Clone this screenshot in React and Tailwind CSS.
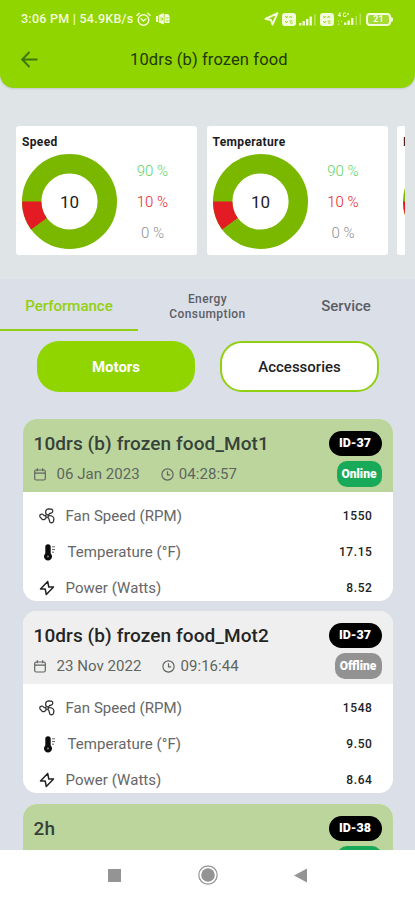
import React from 'react';

const stats = [{ name: 'Speed' }, { name: 'Temperature' }, { name: 'Input' }];

const motors = [
  {
    name: '10drs (b) frozen food_Mot1',
    date: '06 Jan 2023',
    time: '04:28:57',
    id: 'ID-37',
    online: true,
    values: ['1550', '17.15', '8.52'],
  },
  {
    name: '10drs (b) frozen food_Mot2',
    date: '23 Nov 2022',
    time: '09:16:44',
    id: 'ID-37',
    online: false,
    values: ['1548', '9.50', '8.64'],
  },
  {
    name: '2h',
    date: '06 Jan 2023',
    time: '04:28:57',
    id: 'ID-38',
    online: true,
    values: ['1550', '17.15', '8.52'],
  },
];

const SimIcon = () => (
  <svg width="14" height="13" viewBox="0 0 14 13">
    <rect width="14" height="13" rx="3" fill="#f4fbdc" />
    <path d="M3.5 3l1 2 1-2M7.5 5l1-2 1.5 2M3.5 8l1 2 1-2M7.5 8h3M8 10h2.5" fill="none" stroke="#90d500" strokeWidth="0.9" />
  </svg>
);

const SignalIcon = () => (
  <svg width="18" height="13" viewBox="0 0 18 13" fill="#f4fbdc">
    <rect x="0" y="10" width="2.4" height="2.5" />
    <rect x="3.5" y="8" width="2.4" height="4.5" />
    <rect x="7" y="6" width="2.4" height="6.5" />
    <rect x="10.5" y="3.5" width="2.4" height="9" />
    <rect x="15" y="1" width="1.6" height="11.5" opacity="0.4" />
  </svg>
);

const StatusBar = () => (
  <div className="flex h-[38px] items-center pl-[21px] pr-[22px] text-[#f4fbdc]">
    <span className="text-[12.5px] font-medium tracking-[0.25px] whitespace-nowrap">3:06 PM | 54.9KB/s</span>
    <svg className="ml-[3px]" width="15" height="15" viewBox="0 0 15 15" fill="none" stroke="#f4fbdc" strokeWidth="1.5" strokeLinecap="round">
      <circle cx="7.5" cy="8" r="5.3" />
      <path d="M1 3.2L3.2 1.2M14 3.2L11.8 1.2M5.3 6.8L7.2 9L9.8 7" />
    </svg>
    <svg className="ml-[5px]" width="14" height="12" viewBox="0 0 14 12" fill="#f4fbdc">
      <path d="M0 3h2v6H0zM2.8 2l5-2v11.5l-5-2zM8.5 1H12l1.5 2v7H8.5z" />
      <path d="M4.5 5h2v2h-2M10 4.5l1 1L12.5 4M10 8h2.5" fill="none" stroke="#90d500" strokeWidth="0.8" />
    </svg>
    <div className="ml-auto flex items-center gap-[3px]">
      <svg width="15" height="14" viewBox="0 0 15 14" fill="none" stroke="#f4fbdc" strokeWidth="2" strokeLinejoin="round">
        <path d="M1.5 7L13.5 1.2L8.5 12.5L7 8z" />
      </svg>
      <SimIcon />
      <SignalIcon />
      <div className="flex items-center">
        <SimIcon />
        <svg className="ml-[3px]" width="26" height="14" viewBox="0 0 26 14" fill="#f4fbdc">
          <path d="M3 0.5L1.2 3.5H4M3 0.5V5M9 1H6.5V4.5H9V3M10 2h2M11 1v2" fill="none" stroke="#f4fbdc" strokeWidth="0.9" />
          <rect x="1" y="8.5" width="1.2" height="1.5" opacity="0.6" />
          <rect x="4" y="8.5" width="1.2" height="1.5" opacity="0.6" />
          <rect x="1" y="11.5" width="1.2" height="1.5" opacity="0.6" />
          <rect x="7" y="10.5" width="2.4" height="2.5" />
          <rect x="10.5" y="8.5" width="2.4" height="4.5" />
          <rect x="14" y="6" width="2.4" height="7" />
          <rect x="18.5" y="4" width="1.5" height="9" opacity="0.4" />
          <rect x="22.5" y="1.5" width="1.5" height="11.5" opacity="0.4" />
        </svg>
      </div>
      <div className="flex items-center">
        <div className="flex h-[13px] w-[25px] items-center justify-center rounded-[4px] border-2 border-[#f4fbdc] bg-[#a4db34] text-[9px] leading-none font-bold">21</div>
        <div className="h-[5px] w-[2px] rounded-r-sm bg-[#f4fbdc]" />
      </div>
    </div>
  </div>
);

const Header = () => (
  <header className="h-[88px] rounded-b-[14px] bg-[#90d500] shadow-[0_1px_2px_rgba(0,0,0,0.12)]">
    <StatusBar />
    <div className="flex h-[43px] items-center pl-[21px]">
      <svg width="17" height="17" viewBox="0 0 17 17" fill="none" stroke="#3f7a08" strokeWidth="1.9">
        <path d="M16.5 8.5H1.500M8.5 1L1.2 8.5L8.5 16" />
      </svg>
      <h1 className="ml-[92px] pt-[2px] text-[16.5px] tracking-[0.12px] text-[#22380a] whitespace-nowrap">10drs (b) frozen food</h1>
    </div>
  </header>
);

const StatCard = ({ name }) => (
  <div className="h-[129px] w-[181px] shrink-0 rounded-[3px] bg-white px-[6px] pt-[8px]">
    <h2 className="text-[12px] leading-4 font-bold tracking-[0.35px] text-[#1c1c1c]">{name}</h2>
    <div className="mt-1 flex">
      <svg width="96" height="96" viewBox="0 0 96 96" className="shrink-0">
        <circle cx="47.5" cy="47.5" r="37.8" fill="none" stroke="#7ab800" strokeWidth="19.4" />
        {/* 10% slice, starting at nine o'clock and going down */}
        <path d="M0 47.5A47.5 47.5 0 0 0 9.07 75.42L24.77 64.02A28.1 28.1 0 0 1 19.4 47.5z" fill="#e31b23" />
        <text x="47.5" y="54" textAnchor="middle" fontSize="17" fill="#222222">10</text>
      </svg>
      <div className="flex flex-1 flex-col items-center pt-[2px] pr-[4px] text-[15px] leading-[31px] font-light whitespace-nowrap">
        <span className="text-[#5fd463]">90 %</span>
        <span className="text-[#e31b23]">10 %</span>
        <span className="text-[#8f8f8f]">0 %</span>
      </div>
    </div>
  </div>
);

const Tabs = () => (
  <nav className="flex h-[52px] text-center text-[#5b5e66]">
    <div className="flex w-[138px] items-center justify-center border-b-[2.5px] border-[#92d012] pt-[5px] text-[15px] font-medium text-[#92d012]">Performance</div>
    <div className="flex w-[139px] items-center justify-center pt-[3px] text-[12px] leading-[15px] font-medium tracking-[0.4px]">
      Energy<br />Consumption
    </div>
    <div className="flex w-[138px] items-center justify-center pt-[3px] text-[15px] font-medium">Service</div>
  </nav>
);

const FanIcon = () => (
  <svg width="16" height="16" viewBox="0 0 16 16" fill="none" stroke="#333333" strokeWidth="1.3" strokeLinejoin="round">
    <circle cx="8" cy="8" r="1.4" />
    <path d="M7.5 6.6C5.8 4.5 6.5 1 9.5 0.9L12.5 1.2C14.3 2 14.2 4.8 12.3 5C10.8 5.1 10.2 5.4 9.2 7.2" />
    <path d="M9.4 8C11.5 6.9 14.5 8.2 14.9 10.5L14.5 13.5C13.8 15.2 11 15.2 10.6 13.3C10.4 11.8 10.3 10.5 8.7 9.3" />
    <path d="M7.3 9.3C6.8 11.5 4.5 12.2 3 11.2L1 8.8C0.2 6.9 2.2 5.5 3.7 6.3C4.8 7.1 5.3 7.9 6.6 7.9" />
  </svg>
);

const ThermometerIcon = () => (
  <svg width="12" height="17" viewBox="0 0 12 17" fill="#0c0c0c">
    <path d="M1.3 3A2.7 2.7 0 0 1 6.7 3V9.5A4 4 0 1 1 1.3 9.5z" />
    <path d="M8 2.8h3M8 5.5h3M8 8.2h2" stroke="#666666" strokeWidth="1" />
    <circle cx="4" cy="12.5" r="1.1" fill="#777777" />
  </svg>
);

const PowerIcon = () => (
  <svg width="16" height="16" viewBox="0 0 16 16" fill="none" stroke="#222222" strokeWidth="1.5" strokeLinejoin="round">
    <path d="M8.7 1.5L1.5 9H6.2L7.3 14.5L14.5 7H9.8z" />
  </svg>
);

const CalendarIcon = () => (
  <svg width="12" height="13" viewBox="0 0 12 13" fill="none" stroke="currentColor" strokeWidth="1.2">
    <rect x="0.7" y="2" width="10.6" height="10" rx="1.5" />
    <path d="M0.7 5.2h10.6M3.3 0.3v3M8.7 0.3v3" />
  </svg>
);

const ClockIcon = () => (
  <svg width="13" height="13" viewBox="0 0 13 13" fill="none" stroke="currentColor" strokeWidth="1.2">
    <circle cx="6.5" cy="6.5" r="5.6" />
    <path d="M6.5 3.2V6.8H9.2" />
  </svg>
);

const readings = [
  { icon: FanIcon, label: 'Fan Speed (RPM)', pad: 'pl-[16px] gap-[11px]' },
  { icon: ThermometerIcon, label: 'Temperature (°F)', pad: 'pl-[21px] gap-[12px]' },
  { icon: PowerIcon, label: 'Power (Watts)', pad: 'pl-[16px] gap-[11px]' },
];

const MotorCard = ({ name, date, time, id, online, values }) => (
  <article className="h-[182px] shrink-0 overflow-hidden rounded-[14px] bg-white">
    <div className={`flex h-[73px] justify-between pr-[11px] pl-[11px] ${online ? 'bg-[#bcd59d]' : 'bg-[#efefef]'}`}>
      <div className="pt-[13px]">
        <h3 className={`text-[19px] leading-6 font-medium tracking-[0.1px] whitespace-nowrap ${online ? 'text-[#37423a]' : 'text-[#242424]'}`}>{name}</h3>
        <div className="mt-[8px] flex items-center text-[15px] leading-5 tracking-[0.05px] text-[#606560] whitespace-nowrap">
          <CalendarIcon />
          <span className="ml-[11px]">{date}</span>
          <span className="ml-[21px]"><ClockIcon /></span>
          <span className="ml-[5px]">{time}</span>
        </div>
      </div>
      <div className="flex flex-col items-end gap-[5px] pt-[12px] text-[12.5px] font-black text-white">
        <span className="flex h-[25px] w-[53px] items-center justify-center rounded-full bg-black">{id}</span>
        <span className={`flex h-[26px] items-center justify-center rounded-[10px] text-[12px] ${online ? 'w-[45px] bg-[#18aa58]' : 'w-[47px] bg-[#929292]'}`}>
          {online ? 'Online' : 'Offline'}
        </span>
      </div>
    </div>
    <div className="pt-[6px]">
      {readings.map(({ icon: Icon, label, pad }, i) => (
        <div key={label} className={`flex h-9 items-center pr-[20px] ${pad}`}>
          <Icon />
          <span className="text-[15px] tracking-[0.05px] text-[#666666]">{label}</span>
          <span className="ml-auto text-[12px] font-medium tracking-[0.6px] text-[#222222]">{values[i]}</span>
        </div>
      ))}
    </div>
  </article>
);

const NavBar = () => (
  <footer className="flex h-[50px] shrink-0 items-center justify-between bg-white pr-[108px] pl-[108px]">
    <svg width="13" height="13" viewBox="0 0 13 13"><rect width="13" height="13" fill="#949494" /></svg>
    <svg width="20" height="20" viewBox="0 0 20 20">
      <circle cx="10" cy="10" r="9.2" fill="none" stroke="#949494" strokeWidth="1.2" />
      <circle cx="10" cy="10" r="6.8" fill="#949494" />
    </svg>
    <svg width="13" height="15" viewBox="0 0 13 15"><path d="M0 7.5L13 0.5V14.5z" fill="#949494" /></svg>
  </footer>
);

export default function App() {
  return (
    <div className="flex h-[900px] w-[415px] flex-col overflow-hidden bg-[#dbdfe8] font-[Roboto,sans-serif]">
      <div className="h-[279px] shrink-0 bg-[#dfe4e7]">
        <Header />
        <div className="mt-[38px] mr-[10px] ml-[16px] flex gap-[9.5px] overflow-hidden">
          {stats.map((s) => <StatCard key={s.name} name={s.name} />)}
        </div>
      </div>
      <Tabs />
      <div className="mt-[10px] flex justify-between pr-[36px] pl-[37px] text-[15px]">
        <button className="h-[51px] w-[158px] rounded-[22px] bg-[#90d500] pt-[2px] font-bold text-white">Motors</button>
        <button className="h-[51px] w-[159px] rounded-[22px] border-2 border-[#90cf12] bg-white pt-[2px] font-medium text-[#222222]">Accessories</button>
      </div>
      <main className="mt-[27px] flex min-h-0 flex-1 flex-col gap-[10.3px] overflow-hidden px-[22.5px]">
        {motors.map((m) => <MotorCard key={m.name} {...m} />)}
      </main>
      <NavBar />
    </div>
  );
}
